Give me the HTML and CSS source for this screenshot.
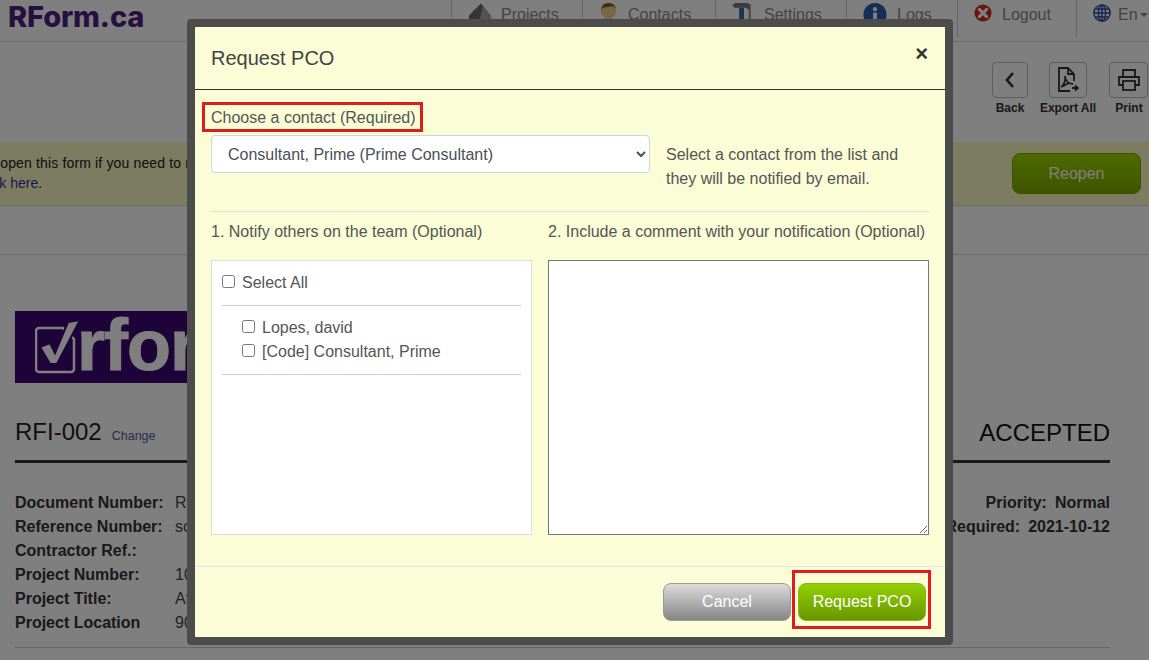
FILE: index.html
```html
<!DOCTYPE html>
<html lang="en">
<head>
<meta charset="utf-8">
<title>Request PCO</title>
<link rel="stylesheet" href="styles.css">
</head>
<body>
<div class="page">
  <header class="top">
    <div class="brand">RForm.ca</div>
    <nav class="nav">
      <a class="nav-item nav-projects"><svg class="ni w24" viewBox="0 0 24 24"><path d="M1 24V13L13 1l10 12 1 11z" fill="#a8a8a8"/><path d="M1 24V13L13 1l2 3-5 20z" fill="#6a6a6e"/></svg>Projects</a>
      <a class="nav-item nav-contacts"><svg class="ni w19" viewBox="0 0 19 26"><path d="M0 26c0-7 4-10 9.500-10S19 19 19 26z" fill="#c8d0dc"/><circle cx="9.500" cy="9" r="8" fill="#f0cc88"/><path d="M2 8c0-5 4-7 7.500-7S17 3 17 7c-2-3-3-3-7-2-3 1-6 0-8 3z" fill="#8a5a20"/></svg>Contacts</a>
      <a class="nav-item nav-settings"><svg class="ni w22" viewBox="0 0 22 26"><path d="M0 3l3-2h13l2 2v5h-2l-1-2H2z" fill="#777"/><rect x="7" y="6" width="5" height="20" fill="#2c6cb0"/><rect x="17" y="2" width="2" height="16" fill="#888"/><rect x="15" y="17" width="6" height="9" rx="2" fill="#e2c020"/></svg>Settings</a>
      <a class="nav-item nav-logs"><svg class="ni w24" viewBox="0 0 24 26"><circle cx="12" cy="13" r="12" fill="#2f5db4"/><circle cx="12" cy="7.500" r="2.200" fill="#fff"/><rect x="10" y="11" width="4" height="10" fill="#fff"/></svg>Logs</a>
      <a class="nav-item nav-logout"><svg class="ni w18" viewBox="0 0 20 20"><circle cx="10" cy="10" r="9.500" fill="#d22f1c"/><path d="M6 6l8 8M14 6l-8 8" stroke="#fff" stroke-width="3.400" stroke-linecap="round"/></svg>Logout</a>
      <a class="nav-item nav-lang"><svg class="ni w18" viewBox="0 0 20 20" fill="none" stroke="#2a4aa8" stroke-width="1.600"><circle cx="10" cy="10" r="9"/><ellipse cx="10" cy="10" rx="4" ry="9"/><path d="M1 10h18M2.500 5.500h15M2.500 14.500h15M10 1v18"/></svg>En<span class="caret"></span></a>
    </nav>
  </header>

  <section class="toolbar">
    <div class="tool tool-back">
      <span class="tool-box"><svg width="14" height="20" viewBox="0 0 14 20" fill="none" stroke="#333" stroke-width="2.600"><path d="M10 3L4 10l6 7"/></svg></span>
      <span class="tool-label">Back</span>
    </div>
    <div class="tool tool-export">
      <span class="tool-box"><svg width="22" height="26" viewBox="0 0 22 26" fill="none" stroke="#333" stroke-width="1.800"><path d="M17 14V7l-6-6H2v23h11"/><path d="M11 1v6h6"/><path d="M4 20c3-2 5-7 4-11 0 4 3 8 8 8M4 20l8-4"/><path d="M15 21h5M18 18.500l3 2.500-3 2.500" fill="#333"/></svg></span>
      <span class="tool-label">Export All</span>
    </div>
    <div class="tool tool-print">
      <span class="tool-box"><svg width="22" height="22" viewBox="0 0 22 22" fill="none" stroke="#333" stroke-width="1.800"><path d="M5 8V1h12v7"/><path d="M5 16H1V8h20v8h-4"/><rect x="5" y="12" width="12" height="9"/></svg></span>
      <span class="tool-label">Print</span>
    </div>
  </section>

  <section class="banner">
    <div class="banner-text">
      <p class="banner-line banner-first">Reopen this form if you need to make changes.</p>
      <p class="banner-line banner-link-line"><a class="link">Click here</a>.</p>
    </div>
    <button class="reopen" type="button">Reopen</button>
  </section>

  <div class="tabs"></div>

  <main class="doc">
    <div class="doc-logo">
      <svg class="doc-check" width="48" height="56" viewBox="0 0 48 56" fill="none"><path d="M4 10h24l11 11v30a3 3 0 0 1-3 3H4a3 3 0 0 1-3-3V13a3 3 0 0 1 3-3z" stroke="#fff" stroke-width="2.500"/><path d="M5 29l10-4 5 10L33 4l12-2-23 44h-7z" fill="#fff" stroke="#3c0672" stroke-width="2"/></svg>
      <span class="doc-logo-text">rform</span>
    </div>
    <div class="doc-title">
      <div><span class="doc-id">RFI-002</span><a class="doc-change">Change</a></div>
      <div class="doc-status">ACCEPTED</div>
    </div>
    <div class="meta">
      <dl class="meta-left">
        <dt>Document Number:</dt><dd>RFI-002</dd>
        <dt>Reference Number:</dt><dd>sc-01</dd>
        <dt>Contractor Ref.:</dt><dd></dd>
        <dt>Project Number:</dt><dd>1001</dd>
        <dt>Project Title:</dt><dd>Atrium</dd>
        <dt>Project Location</dt><dd>90 Main</dd>
      </dl>
      <div class="meta-right">
        <div>Priority:<span class="meta-val">Normal</span></div>
        <div>Date Required:<span class="meta-val">2021-10-12</span></div>
      </div>
    </div>
    <hr class="doc-end">
  </main>
</div>

<div class="overlay"></div>

<div class="modal">
  <div class="modal-head">
    <h2 class="modal-title">Request PCO</h2>
    <span class="modal-close">×</span>
  </div>
  <div class="modal-body">
    <label class="contact-label">Choose a contact (Required)</label>
    <div class="contact-row">
      <select class="contact-select"><option>Consultant, Prime (Prime Consultant)</option></select>
      <p class="contact-help">Select a contact from the list and they will be notified by email.</p>
    </div>
    <hr class="body-rule">
    <div class="columns">
      <div>
        <h3 class="col-head">1. Notify others on the team (Optional)</h3>
        <div class="team">
          <label class="check"><input type="checkbox">Select All</label>
          <hr class="team-rule first">
          <div class="team-list">
            <label class="check"><input type="checkbox">Lopes, david</label>
            <label class="check"><input type="checkbox">[Code] Consultant, Prime</label>
          </div>
          <hr class="team-rule">
        </div>
      </div>
      <div>
        <h3 class="col-head">2. Include a comment with your notification (Optional)</h3>
        <textarea class="comment"></textarea>
      </div>
    </div>
  </div>
  <div class="modal-foot">
    <button class="btn btn-cancel" type="button">Cancel</button>
    <div class="highlight-btn"><button class="btn btn-go" type="button">Request PCO</button></div>
  </div>
</div>
</body>
</html>
```

FILE: styles.css
```css
* { box-sizing: border-box; }
html, body { margin: 0; height: 660px; overflow: hidden; }
body { background: #fff; color: #333; font: 16px/24px "Liberation Sans", Arial, sans-serif; }
.page { width: 1149px; height: 660px; overflow: hidden; }

/* header */
.top { height: 42px; display: flex; justify-content: space-between; border-bottom: 1px solid #dcdcdc; }
.brand { margin: -1px 0 0 8px; font: 800 29px/36px Inter, sans-serif; letter-spacing: -.15px; color: #4e1f85; }
.nav { display: flex; }
.nav-item { height: 37px; padding-left: 16px; border-left: 1px solid #ccc; display: flex; align-items: flex-start; gap: 10px; line-height: 30px; color: #888; white-space: nowrap; }
.nav-projects { width: 131px; gap: 9px; }
.nav-contacts { width: 133px; }
.nav-settings { width: 131px; }
.nav-logs { width: 111px; }
.nav-logout { width: 119px; }
.nav-lang { width: 73px; gap: 7px; }
.ni { flex: none; margin-top: 2px; height: 25px; }
.w24 { width: 24px; }
.w22 { width: 22px; }
.w19 { width: 19px; }
.w18 { width: 18px; height: 20px; margin-top: 3px; }
.caret { display: inline-block; margin: 13px 0 0 -5px; border: 4px solid transparent; border-top-color: #888; border-bottom: 0; }

/* toolbar */
.toolbar { height: 100px; padding-top: 20px; display: flex; justify-content: flex-end; gap: 12px; }
.tool { display: flex; flex-direction: column; align-items: center; }
.tool-back { width: 36px; margin-right: -1px; }
.tool-export { width: 58px; }
.tool-print { width: 40px; }
.tool-box { height: 36px; display: flex; align-items: center; justify-content: center; border: 1px solid #bbb; border-radius: 4px; }
.tool-back .tool-box { width: 36px; }
.tool-export .tool-box { width: 38px; }
.tool-print .tool-box { width: 39px; margin-right: 1px; }
.tool-label { margin-top: 4px; font-size: 12px; line-height: 12px; font-weight: 700; color: #333; white-space: nowrap; }

/* banner */
.banner { height: 64px; padding: 11px 8px 0 0; display: flex; justify-content: space-between; align-items: flex-start; background: #f8f8c2; border-bottom: 1px solid #d8d8d8; }
.banner-text { margin-left: -18px; font-size: 14px; line-height: 21px; color: #222; }
.banner-line { margin: 0; white-space: nowrap; }
.banner-first { letter-spacing: .15px; }
.banner-link-line { margin: -1px 0 0 -6px; }
.link { color: #3a2bb0; }
.reopen { width: 129px; height: 41px; border: 1px solid #7a9e00; border-radius: 8px; background: linear-gradient(#9bd400, #7eaa00); color: #fff; font: 16px "Liberation Sans", Arial, sans-serif; }

/* tabs */
.tabs { height: 49px; border-bottom: 1px solid #d8d8d8; }

/* document */
.doc { padding: 56px 39px 0 15px; }
.doc-logo { width: 600px; height: 72px; background: linear-gradient(115deg, #3c0672 55%, #30065e 55%); display: flex; align-items: center; padding-left: 20px; overflow: hidden; color: #fff; }
.doc-check { flex: none; margin-top: -2px; }
.doc-logo-text { margin: -4px 0 0 -6px; font-size: 72px; line-height: 72px; font-weight: 700; letter-spacing: -1px; color: #fff; -webkit-text-stroke: 1px #fff; }
.doc-title { height: 65px; padding-bottom: 12px; margin-top: 15px; display: flex; justify-content: space-between; align-items: flex-end; border-bottom: 3px solid #333; }
.doc-id { font-size: 24px; line-height: 30px; color: #222; }
.doc-change { margin-left: 10px; font-size: 12.500px; color: #55579c; }
.doc-status { font-size: 24px; line-height: 30px; color: #111; }
.meta { margin-top: 28px; display: flex; justify-content: space-between; }
.meta-left { margin: 0; display: grid; grid-template-columns: 160px 200px; grid-auto-rows: 24px; }
.meta-left dt { font-weight: 700; color: #333; white-space: nowrap; }
.meta-left dd { margin: 0; color: #444; }
.meta-right { font-weight: 700; text-align: right; color: #333; }
.meta-val { margin-left: 8px; }
.doc-end { margin: 12px 0 0; border: 0; border-top: 1px solid #ccc; }

/* overlay and modal */
.overlay { position: fixed; inset: 0; background: rgba(0, 0, 0, .5); }
.modal { position: absolute; left: 187px; top: 19px; width: 766px; height: 626px; display: flex; flex-direction: column; border: 8px solid #4c4c4c; border-radius: 4px; background: #fafdd6; color: #555; }
.modal-head { height: 63px; flex: none; display: flex; justify-content: space-between; padding: 0 17px 0 16px; border-bottom: 1px solid #333; }
.modal-title { margin: 16px 0 0; font-size: 20px; line-height: 30px; font-weight: 400; color: #444; }
.modal-close { margin: 13px 0 0; font-size: 22px; line-height: 28px; font-weight: 700; color: #333; }
.modal-body { flex: 1; padding: 12px 16px 0; }
.contact-label { display: block; width: 221px; height: 30px; margin-left: -9px; padding-left: 6px; border: 3px solid #e01b1b; line-height: 26px; white-space: nowrap; color: #555; }
.contact-row { margin-top: 3px; display: grid; grid-template-columns: 439px 1fr; column-gap: 16px; }
.contact-select { width: 439px; height: 38px; padding: 6px 12px; border: 1px solid #ced4da; border-radius: 4px; background: #fff; color: #495057; font: 16px "Liberation Sans", Arial, sans-serif; }
.contact-help { margin: 8px 0 0; line-height: 24px; color: #555; }
.body-rule { margin: 20px 0 0; border: 0; border-top: 1px solid #ddd; }
.columns { margin-top: 8px; display: grid; grid-template-columns: 321px 381px; column-gap: 16px; }
.col-head { margin: 0 0 16px; font-size: 16px; line-height: 24px; font-weight: 400; white-space: nowrap; color: #555; }
.team { height: 275px; padding: 9px 10px 0; background: #fff; border: 1px solid #ddd; }
.check { display: flex; align-items: center; gap: 7px; height: 24px; padding-top: 2px; color: #555; }
.check input { width: 13px; height: 13px; margin: -4px 0 0; flex: none; }
.team-rule { margin: 11px 0 0; border: 0; border-top: 1px solid #ccc; }
.team-list { margin-top: 9px; padding-left: 20px; }
.comment { display: block; width: 100%; height: 275px; background: #fff; border: 1px solid #767676; }
.modal-foot { height: 71px; flex: none; padding: 3px 14px 0 0; display: flex; justify-content: flex-end; align-items: flex-start; border-top: 1px solid #dee2e6; }
.highlight-btn { height: 59px; margin-left: 1px; padding: 10px 2px 0 3px; border: 3px solid #e01b1b; }
.btn { width: 128px; height: 38px; border-radius: 8px; color: #fff; font: 16px "Liberation Sans", Arial, sans-serif; }
.btn-cancel { margin-top: 13px; border: 1px solid #999; background: linear-gradient(#dcdcdc, #858585); }
.btn-go { border: 1px solid #8ab800; background: linear-gradient(#93d000, #689600); }
```
